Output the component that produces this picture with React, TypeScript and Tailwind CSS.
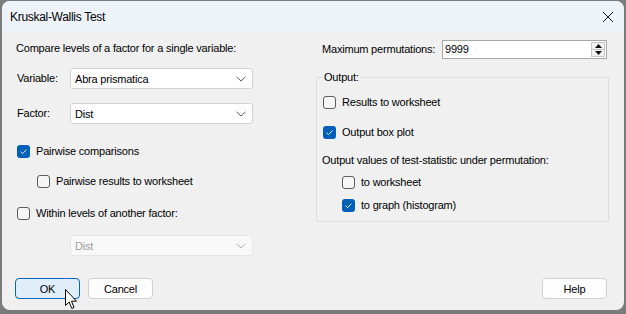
import React from "react";

const txt = "font-['Liberation_Sans',Arial,sans-serif] text-[11px] tracking-[-0.2px] text-black";

function Check({ checked }: { checked?: boolean }) {
  if (checked) {
    return (
      <span className="w-[13px] h-[13px] rounded-[3px] bg-[#005fb8] flex items-center justify-center shrink-0">
        <svg width="9" height="9" viewBox="0 0 9 9">
          <path d="M1.6 4.7 L3.6 6.6 L7.4 2.6" stroke="white" strokeWidth="0.9" fill="none" />
        </svg>
      </span>
    );
  }
  return <span className="w-[13px] h-[13px] rounded-[3px] border border-[#5c5c5c] bg-[#f6f6f6] shrink-0" />;
}

function CheckRow({ label, checked, className }: { label: string; checked?: boolean; className?: string }) {
  return (
    <div className={`flex items-center gap-[6px] h-[16px] ${className ?? ""}`}>
      <Check checked={checked} />
      <span className="leading-[16px] whitespace-nowrap">{label}</span>
    </div>
  );
}

function Chevron({ color }: { color: string }) {
  return (
    <svg width="10" height="6" viewBox="0 0 10 6">
      <path d="M0.5 0.8 L5 5 L9.5 0.8" stroke={color} strokeWidth="1" fill="none" />
    </svg>
  );
}

function Select({ value, disabled }: { value: string; disabled?: boolean }) {
  return (
    <div
      className={`w-[183px] h-[21px] rounded-[3px] border flex items-center justify-between pl-[4px] pr-[6px] ${
        disabled ? "bg-[#f9f9f9] border-[#e6e6e6] text-[#9d9d9d]" : "bg-white border-[#d2d2d2]"
      }`}
    >
      <span className="leading-[16px]">{value}</span>
      <Chevron color={disabled ? "#b5b5b5" : "#5e5e5e"} />
    </div>
  );
}

function Button({ label, primary }: { label: string; primary?: boolean }) {
  return (
    <div
      className={`w-[65px] h-[21px] rounded-[4px] border flex items-center justify-center ${
        primary ? "bg-[#e0eef9] border-[#0067c0]" : "bg-[#fdfdfd] border-[#d0d0d0]"
      }`}
    >
      <span className="leading-[16px]">{label}</span>
    </div>
  );
}

export default function App() {
  return (
    <div className={`relative w-[626px] h-[314px] bg-[#7b7b7b] pt-[1px] pl-[2px] ${txt}`}>
      <div className="w-[622px] h-[309px] rounded-[8px] overflow-hidden bg-[#f0f0f0] flex flex-col">
        {/* title bar */}
        <div className="h-[31px] bg-[#eef3f9] flex items-center justify-between pl-[8px] pr-[10px]">
          <span className="text-[12px] tracking-[-0.3px] leading-[16px]">Kruskal-Wallis Test</span>
          <svg width="12" height="12" viewBox="0 0 12 12">
            <path d="M1 1 L11 11 M11 1 L1 11" stroke="#1a1a1a" strokeWidth="1" />
          </svg>
        </div>

        {/* body */}
        <div className="h-[246px] flex">
          <div className="w-[314px] pl-[14px] flex flex-col">
            <div className="mt-[8px] leading-[16px] h-[16px]">Compare levels of a factor for a single variable:</div>
            <div className="mt-[12px] flex items-center">
              <span className="w-[54px] pl-[1px]">Variable:</span>
              <Select value="Abra prismatica" />
            </div>
            <div className="mt-[14px] flex items-center">
              <span className="w-[54px] pl-[1px]">Factor:</span>
              <Select value="Dist" />
            </div>
            <CheckRow className="mt-[19px] pl-[1px]" label="Pairwise comparisons" checked />
            <CheckRow className="mt-[14px] pl-[21px]" label="Pairwise results to worksheet" />
            <CheckRow className="mt-[16px] pl-[1px]" label="Within levels of another factor:" />
            <div className="mt-[14px] pl-[54px]">
              <Select value="Dist" disabled />
            </div>
          </div>

          <div className="w-[293px] flex flex-col">
            <div className="mt-[7px] flex items-center h-[20px]">
              <span className="w-[126px] pl-[6px]">Maximum permutations:</span>
              <div className="w-[165px] h-[19px] bg-white border border-[#a8a8a8] flex">
                <span className="flex-1 pl-[2px] leading-[17px]">9999</span>
                <div className="w-[14px] my-[1px] mr-[1px] flex flex-col border border-[#c8c8c8] bg-[#f2f2f2]">
                  <div className="flex-1 flex items-center justify-center border-b border-[#c8c8c8]">
                    <svg width="7" height="4" viewBox="0 0 7 4">
                      <path d="M0 4 L3.5 0 L7 4 Z" fill="#111" />
                    </svg>
                  </div>
                  <div className="flex-1 flex items-center justify-center">
                    <svg width="7" height="4" viewBox="0 0 7 4">
                      <path d="M0 0 L3.5 4 L7 0 Z" fill="#111" />
                    </svg>
                  </div>
                </div>
              </div>
            </div>

            <div className="mt-[18px] h-[145px] border border-[#dcdcdc] rounded-[2px] flex flex-col pl-[6px]">
              <span className="-mt-[9px] w-fit bg-[#f0f0f0] px-[1px] leading-[16px]">Output:</span>
              <CheckRow className="mt-[9px]" label="Results to worksheet" />
              <CheckRow className="mt-[14px]" label="Output box plot" checked />
              <div className="mt-[12px] h-[16px] leading-[16px] -ml-[1px]">Output values of test-statistic under permutation:</div>
              <CheckRow className="mt-[6px] pl-[19px]" label="to worksheet" />
              <CheckRow className="mt-[7px] pl-[19px]" label="to graph (histogram)" checked />
            </div>
          </div>
        </div>

        {/* footer */}
        <div className="flex items-center pl-[13px] pr-[17px]">
          <div className="flex gap-[8px]">
            <Button label="OK" primary />
            <Button label="Cancel" />
          </div>
          <div className="ml-auto">
            <Button label="Help" />
          </div>
        </div>
      </div>

      {/* mouse pointer */}
      <svg className="absolute left-[65px] top-[289px]" width="13" height="21" viewBox="0 0 13 21">
        <path
          d="M0.5 0.5 L0.5 16.5 L4.2 13 L6.8 19.5 L9 18.6 L6.5 12.2 L11.5 12.2 Z"
          fill="white"
          stroke="black"
          strokeWidth="1"
          strokeLinejoin="round"
        />
      </svg>
    </div>
  );
}
